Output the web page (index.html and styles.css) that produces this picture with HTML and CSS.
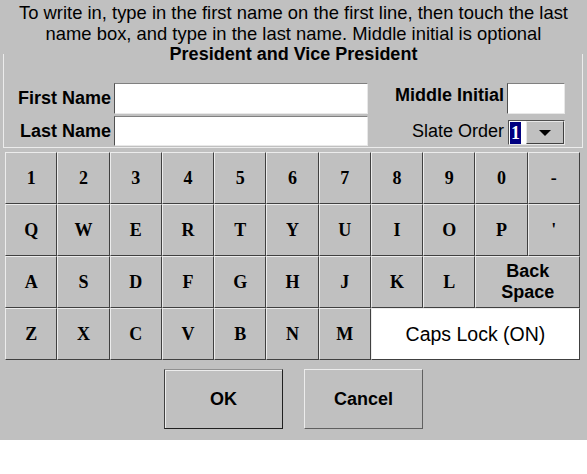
FILE: index.html
```html
<!DOCTYPE html>
<html lang="en">
<head>
    <meta charset="UTF-8">
    <meta name="viewport" content="width=device-width, initial-scale=1.0">
    <title>Write-In Candidate</title>
    <link rel="stylesheet" href="styles.css">
</head>
<body>
    <div class="screen">
        <div class="prompt">
            <p>To write in, type in the first name on the first line, then touch the last<br>name box, and type in the last name. Middle initial is optional</p>
            <p class="office">President and Vice President</p>
        </div>

        <div class="name-panel">
            <div class="field-label">First Name</div>
            <div class="text-box"></div>
            <div class="field-label raised">Middle Initial</div>
            <div class="text-box"></div>

            <div class="field-label">Last Name</div>
            <div class="text-box"></div>
            <div class="field-label plain">Slate Order</div>
            <div class="slate-select">
                <div class="slate-value"><span class="selected">1</span></div>
                <div class="slate-arrow">
                    <svg width="12" height="6" viewBox="0 0 12 6"><polygon points="0,0 12,0 6,6" fill="#000"/></svg>
                </div>
            </div>
        </div>

        <div class="keyboard">
            <div class="key">1</div>
            <div class="key">2</div>
            <div class="key">3</div>
            <div class="key">4</div>
            <div class="key">5</div>
            <div class="key">6</div>
            <div class="key">7</div>
            <div class="key">8</div>
            <div class="key">9</div>
            <div class="key">0</div>
            <div class="key">-</div>

            <div class="key">Q</div>
            <div class="key">W</div>
            <div class="key">E</div>
            <div class="key">R</div>
            <div class="key">T</div>
            <div class="key">Y</div>
            <div class="key">U</div>
            <div class="key">I</div>
            <div class="key">O</div>
            <div class="key">P</div>
            <div class="key">'</div>

            <div class="key">A</div>
            <div class="key">S</div>
            <div class="key">D</div>
            <div class="key">F</div>
            <div class="key">G</div>
            <div class="key">H</div>
            <div class="key">J</div>
            <div class="key">K</div>
            <div class="key">L</div>
            <div class="key backspace">Back<br>Space</div>

            <div class="key">Z</div>
            <div class="key">X</div>
            <div class="key">C</div>
            <div class="key">V</div>
            <div class="key">B</div>
            <div class="key">N</div>
            <div class="key">M</div>
            <div class="key caps">Caps Lock (ON)</div>
        </div>

        <div class="actions">
            <button class="action-button default">OK</button>
            <button class="action-button">Cancel</button>
        </div>
    </div>
</body>
</html>
```

FILE: styles.css
```css
body {
    margin: 0;
    background-color: #fff;
    font-family: "Liberation Sans", Arial, sans-serif;
    color: #000;
}
.screen {
    background-color: #c0c0c0;
    padding-bottom: 11px;
}
.prompt {
    padding-top: 2px;
    text-align: center;
    font-size: 18.4px;
    line-height: 21px;
    white-space: nowrap;
}
.prompt p {
    margin: 0;
}
.office {
    font-weight: bold;
    font-size: 18px;
}
.name-panel {
    margin: -11px 4px 0 3px;
    padding: 29px 17px 1px 0;
    border: 1px solid #ececec;
    border-top: none;
    display: grid;
    grid-template-columns: 107px 254px 1fr 58px;
    grid-template-rows: 31px 30px;
    column-gap: 3px;
    row-gap: 2px;
}
.field-label {
    align-self: center;
    text-align: right;
    font-size: 18px;
    font-weight: bold;
    white-space: nowrap;
}
.field-label.raised {
    margin-bottom: 6px;
}
.field-label.plain {
    font-weight: normal;
}
.text-box {
    background-color: #fff;
    border: 1px solid;
    border-color: #808080 #e8e8e8 #e8e8e8 #505050;
}
.slate-select {
    align-self: end;
    margin: 0 0 1px 1px;
    height: 25px;
    box-sizing: border-box;
    display: flex;
    background-color: #fff;
    border: 1px solid;
    border-color: #505050 #e8e8e8 #e8e8e8 #505050;
}
.slate-value {
    width: 16px;
    padding-left: 1px;
    display: flex;
    align-items: center;
}
.selected {
    background-color: #000080;
    color: #fff;
    font-family: "Liberation Serif", "Times New Roman", serif;
    font-weight: bold;
    font-size: 18px;
    line-height: 22px;
    padding: 0 1px;
}
.slate-arrow {
    flex: 1;
    display: flex;
    align-items: center;
    justify-content: center;
    background-color: #c0c0c0;
    border: 1px solid;
    border-color: #e8e8e8 #404040 #404040 #e8e8e8;
}
.keyboard {
    margin: 4px 0 0 5px;
    width: 575px;
    display: grid;
    grid-template-columns: repeat(11, 1fr);
    grid-auto-rows: 52px;
}
.key {
    display: flex;
    align-items: center;
    justify-content: center;
    text-align: center;
    background-color: #c0c0c0;
    border: 1px solid;
    border-color: #ececec #404040 #404040 #ececec;
    font-family: "Liberation Serif", "Times New Roman", serif;
    font-weight: bold;
    font-size: 18px;
}
.key.backspace {
    grid-column: span 2;
    font-family: "Liberation Sans", Arial, sans-serif;
    line-height: 21px;
}
.key.caps {
    grid-column: span 4;
    background-color: #fff;
    font-family: "Liberation Sans", Arial, sans-serif;
    font-weight: normal;
    font-size: 19.5px;
}
.actions {
    margin-top: 9px;
    display: flex;
    justify-content: center;
    gap: 21px;
}
.action-button {
    width: 119px;
    height: 60px;
    background-color: #c0c0c0;
    border: 1px solid;
    border-color: #ececec #606060 #606060 #ececec;
    font-family: "Liberation Sans", Arial, sans-serif;
    font-weight: bold;
    font-size: 18px;
    color: #000;
    padding: 0;
}
.action-button.default {
    border-color: #909090 #202020 #202020 #404040;
    box-shadow: inset 1px 1px 0 #ececec;
}
```
